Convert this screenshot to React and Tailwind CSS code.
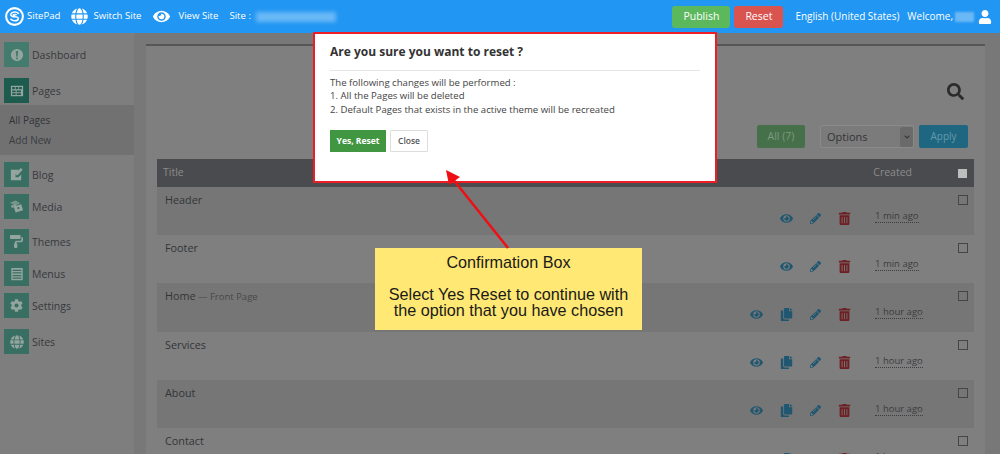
import React from 'react';
import { FaEye, FaGlobe, FaPencilAlt, FaTrashAlt, FaCopy, FaSearch, FaUser, FaCog, FaPaintRoller, FaChevronDown } from 'react-icons/fa';

const LogoIcon = () => (
    <svg viewBox="0 0 24 24" className="w-[19px] h-[19px]">
        <circle cx="12" cy="12" r="10.6" fill="none" stroke="#fff" strokeWidth="2.6" />
        <path d="M17 8.2C15 5.6 8.6 5.6 7.4 8.8c-1 3 3.2 3.4 5 3.4 2 0 5 .4 4.4 3-.7 2.800-7 3-9.300.3" fill="none" stroke="#fff" strokeWidth="1.9" strokeLinecap="round" />
        <path d="M14.6 9.8c-1.300-1-3.800-1-4.300 0-.4 .8 1.200 1 2.400 1" fill="none" stroke="#fff" strokeWidth="1.3" strokeLinecap="round" />
    </svg>
);

const AlertIcon = () => (
    <svg viewBox="0 0 16 16" className="w-[14px] h-[14px]" fill="#94a5a0">
        <path d="M8 1a7 7 0 1 0 0 14A7 7 0 0 0 8 1zM6.500 3.500h3L8.800 10H7.200L6.500 3.500zM8 10.800a1.200 1.200 0 1 1 0 2.400 1.200 1.200 0 0 1 0-2.400z" fillRule="evenodd" />
    </svg>
);

const PagesIcon = () => (
    <svg viewBox="0 0 16 16" className="w-[14px] h-[14px]" fill="#94a5a0">
        <path d="M1 2h14v12H1V2zm1.500 1.500v2.500h3V3.500h-3zm4 0v2.500h3V3.500h-3zm4 0v2.500h3V3.500h-3zm-8 4v2h4v-2h-4zm5 0v2h5v-2h-5zm-5 3v2h4v-2h-4zm5 0v2h5v-2h-5z" fillRule="evenodd" />
    </svg>
);

const BlogIcon = () => (
    <svg viewBox="0 0 16 16" className="w-[15px] h-[15px]" fill="#94a5a0">
        <path d="M2 3h9L7 8v3h3l3-3v6H2V3z" />
        <path d="M12.500 1l2 2-5 5.500-2.200.4.400-2.200z" />
    </svg>
);

const MediaIcon = () => (
    <svg viewBox="0 0 16 16" className="w-[15px] h-[15px]" fill="#94a5a0">
        <path d="M1 4l6-2.500 5 3-5 2.500z" opacity=".7" />
        <path d="M2 7l5-1.500 1 2.500-5 1.500z" opacity=".85" />
        <path d="M5 8l8-2.500 2 6.500-8 2.500zm5 .5a1.200 1.200 0 1 0 0 2.400 1.200 1.200 0 0 0 0-2.400z" fillRule="evenodd" />
    </svg>
);

const MenusIcon = () => (
    <svg viewBox="0 0 16 16" className="w-[14px] h-[14px]" fill="#94a5a0">
        <path d="M1.500 1h13v14h-13V1zm1.500 2v1.500h10V3H3zm0 3v1.500h10V6H3zm0 3v1.500h10V9H3zm0 3v1.500h10V12H3z" fillRule="evenodd" />
    </svg>
);

const sideTop = [
    { label: 'Dashboard', icon: <AlertIcon />, box: 'bg-[#437c6e]', cls: 'mt-[9px]' },
    { label: 'Pages', icon: <PagesIcon />, box: 'bg-[#1c5b4d]', cls: 'mt-[11px]' },
];

const sideBottom = [
    { label: 'Blog', icon: <BlogIcon />, cls: 'mt-[7px]' },
    { label: 'Media', icon: <MediaIcon />, cls: 'mt-[7px]' },
    { label: 'Themes', icon: <FaPaintRoller className="text-[13px] text-[#94a5a0]" />, cls: 'mt-[10px]' },
    { label: 'Menus', icon: <MenusIcon />, cls: 'mt-[7px]' },
    { label: 'Settings', icon: <FaCog className="text-[13px] text-[#94a5a0]" />, cls: 'mt-[7px]' },
    { label: 'Sites', icon: <FaGlobe className="text-[14px] text-[#94a5a0]" />, cls: 'mt-[11px]' },
];

const rows = [
    { title: 'Header', time: '1 min ago', copy: false, dark: true },
    { title: 'Footer', time: '1 min ago', copy: false, dark: false },
    { title: 'Home', note: 'Front Page', time: '1 hour ago', copy: true, dark: true },
    { title: 'Services', time: '1 hour ago', copy: true, dark: false },
    { title: 'About', time: '1 hour ago', copy: true, dark: true },
    { title: 'Contact', time: '1 hour ago', copy: true, dark: false },
];

const SideItem = ({ item }) => (
    <div className={`flex items-center gap-[3px] pl-[4px] ${item.cls}`}>
        <div className={`w-[25px] h-[25px] flex items-center justify-center ${item.box || 'bg-[#386f62]'}`}>
            {item.icon}
        </div>
        <span className="pt-[2px] text-[10.5px] text-[#36393d]">{item.label}</span>
    </div>
);

const Row = ({ row }) => (
    <div className={`h-[48.2px] flex justify-between pl-[8px] pr-[6px] ${row.dark ? 'bg-[#767676]' : 'bg-[#7f7f7f]'}`}>
        <div className="pt-[6px] text-[10.8px] leading-[14px] text-[#333538]">
            {row.title}
            {row.note && <span className="text-[9.5px] text-[#46484a]"> — {row.note}</span>}
        </div>
        <div className="flex">
            <div className="flex items-center gap-[17px] pt-[14px]">
                <FaEye className="text-[13px] text-[#1f5670]" />
                {row.copy && <FaCopy className="text-[13px] text-[#1f5670]" />}
                <FaPencilAlt className="text-[11px] text-[#1f5670]" />
                <FaTrashAlt className="text-[13px] text-[#6e1f23]" />
            </div>
            <div className="w-[107px] pl-[24px] pt-[22px]">
                <span className="text-[9.5px] leading-[13px] block w-fit whitespace-nowrap text-[#3b3d3f] border-b border-dotted border-[#3b3d3f]">{row.time}</span>
            </div>
            <div className="pt-[8px]">
                <div className="w-[10px] h-[10px] border border-[#454545]" />
            </div>
        </div>
    </div>
);

export default function App() {
    return (
        <div className="relative w-[1000px] h-[454px] overflow-hidden font-['Open_Sans',sans-serif] bg-[#787878]">
            {/* top bar */}
            <header className="h-[33px] bg-[#2196f3] text-white text-[10px] flex items-center">
                <div className="flex items-center pl-[5px] text-[9.6px]">
                    <LogoIcon />
                    <span className="ml-[3px]">SitePad</span>
                    <FaGlobe className="ml-[11px] text-[17px]" />
                    <span className="ml-[5px]">Switch Site</span>
                    <FaEye className="ml-[12px] text-[17px]" />
                    <span className="ml-[8px]">View Site</span>
                    <span className="ml-[11px]">Site :</span>
                    <div className="ml-[5px] w-[80px] h-[10px] bg-[#6ab8f6] blur-[2px]" />
                </div>
                <div className="ml-auto flex items-center">
                    <button className="w-[58px] h-[22px] rounded-[3px] bg-[#5cb85c] text-[10.5px] text-white">Publish</button>
                    <button className="ml-[4px] w-[49px] h-[22px] rounded-[3px] bg-[#d9534f] text-[10.5px] text-white">Reset</button>
                    <span className="ml-[12px]">English (United States)</span>
                    <span className="ml-[8px]">Welcome,</span>
                    <div className="ml-[2px] w-[19px] h-[10px] bg-[#6ab8f6] blur-[1px]" />
                    <FaUser className="ml-[4px] mr-[8px] text-[14px]" />
                </div>
            </header>

            <div className="flex h-[421px]">
                {/* sidebar */}
                <aside className="w-[134px] bg-[#7e7e7e] flex flex-col">
                    <div className="h-[72px]">
                        {sideTop.map((item) => <SideItem key={item.label} item={item} />)}
                    </div>
                    <div className="h-[50px] bg-[#717171] pl-[9px] pt-[5px] text-[10px] leading-[20px] text-[#303336]">
                        <div>All Pages</div>
                        <div className="text-[#3a3d40]">Add New</div>
                    </div>
                    {sideBottom.map((item) => <SideItem key={item.label} item={item} />)}
                </aside>

                {/* main panel */}
                <main className="flex-1 pl-[12px] pr-[15px] pt-[11px]">
                    <div className="h-full bg-[#7f7f7f] border-t-[2px] border-[#565656] px-[11px]">
                        <div className="h-[37px]" />
                        <div className="flex justify-end pr-[10px]">
                            <FaSearch className="text-[17px] text-[#2b2b2b]" />
                        </div>
                        <div className="flex justify-end items-center mt-[25px] pr-[6px] text-[10.5px]">
                            <div className="w-[48px] h-[23px] rounded-[2px] bg-[#46704a] text-[#7c9a7e] flex items-center justify-center">All (7)</div>
                            <div className="ml-[15px] w-[94px] h-[23px] rounded-[2px] border border-[#8a8a8a] bg-[#7b7b7b] text-[11px] text-[#333437] flex items-center pl-[6px] pt-[1px]">
                                Options
                                <div className="ml-auto w-[13px] h-full bg-[#6a6a6a] rounded-[2px] flex items-center justify-center">
                                    <FaChevronDown className="text-[6px] text-[#333]" />
                                </div>
                            </div>
                            <div className="ml-[5px] w-[49px] h-[23px] rounded-[2px] bg-[#1f6780] text-[10px] text-[#6499ac] flex items-center justify-center">Apply</div>
                        </div>
                        <div className="mt-[11px] h-[28px] bg-[#4a4b4e] flex items-center justify-between pl-[6px] pr-[7px] text-[10.5px] text-[#8c8c8c]">
                            <span>Title</span>
                            <div className="flex items-center">
                                <span>Created</span>
                                <div className="ml-[46px] w-[9px] h-[9px] bg-[#bdbdbd]" />
                            </div>
                        </div>
                        {rows.map((row) => <Row key={row.title} row={row} />)}
                    </div>
                </main>
            </div>

            {/* confirm dialog */}
            <div className="absolute left-[313px] top-[32px] w-[404px] h-[151px] bg-white border-2 border-[#ee1c25] px-[15px] pt-[9px]">
                <h2 className="text-[12px] leading-[18px] font-bold text-[#333]">Are you sure you want to reset ?</h2>
                <div className="mt-[9px] border-t border-[#e5e5e5]" />
                <div className="mt-[5px] text-[9.6px] leading-[13.4px] text-[#444]">
                    <div>The following changes will be performed :</div>
                    <div>1. All the Pages will be deleted</div>
                    <div>2. Default Pages that exists in the active theme will be recreated</div>
                </div>
                <div className="flex gap-[4px] mt-[14px]">
                    <button className="w-[56px] h-[22px] bg-[#419641] text-white text-[8.5px] font-bold">Yes, Reset</button>
                    <button className="w-[38px] h-[22px] bg-white border border-[#ddd] rounded-[1px] text-[#555] text-[8.5px] font-semibold">Close</button>
                </div>
            </div>

            {/* callout */}
            <div className="absolute left-[375px] top-[248px] w-[267px] h-[82px] bg-[#ffe873] pt-[6px] text-center font-['Liberation_Sans',sans-serif] text-[16.2px] leading-[16.4px] text-[#1a1a1a]">
                <div>Confirmation Box</div>
                <div className="mt-[15.6px]">Select Yes Reset to continue with</div>
                <div>the option that you have chosen</div>
            </div>

            {/* arrow */}
            <svg className="absolute left-[440px] top-[165px]" width="75" height="85" viewBox="0 0 75 85">
                <path d="M68 83L12 13" stroke="#ee0f14" strokeWidth="2.5" fill="none" />
                <path d="M6 5L20 12L9 20Z" fill="#ee0f14" />
            </svg>
        </div>
    );
}
